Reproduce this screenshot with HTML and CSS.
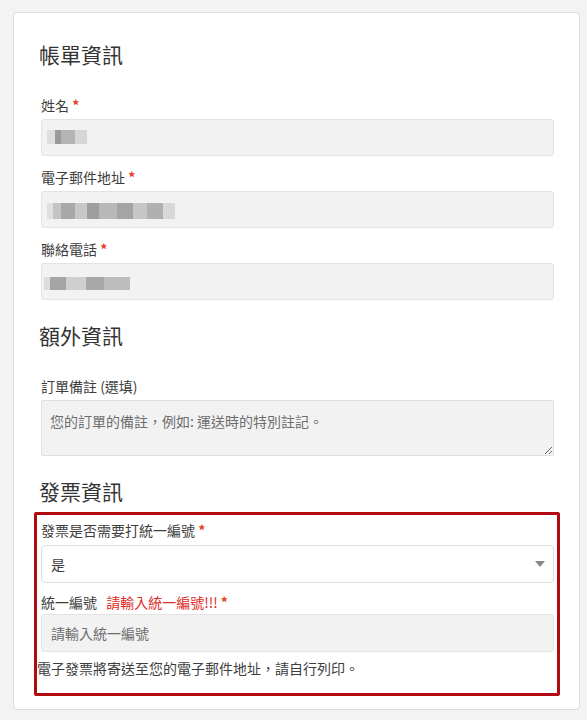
FILE: index.html
```html
<!DOCTYPE html>
<html lang="zh-Hant">
<head>
<meta charset="utf-8">
<link rel="stylesheet" href="styles.css">
</head>
<body>
<div class="card">
  <h3 class="heading first">帳單資訊</h3>
  <div class="row">
    <label class="label">姓名 <span class="req">*</span></label>
    <div class="input"><span class="redact r-name"></span></div>
  </div>
  <div class="row">
    <label class="label">電子郵件地址 <span class="req">*</span></label>
    <div class="input"><span class="redact r-email"></span></div>
  </div>
  <div class="row">
    <label class="label">聯絡電話 <span class="req">*</span></label>
    <div class="input"><span class="redact r-phone"></span></div>
  </div>

  <h3 class="heading second">額外資訊</h3>
  <div class="row">
    <label class="label">訂單備註 (選填)</label>
    <textarea class="textarea" placeholder="您的訂單的備註，例如: 運送時的特別註記。"></textarea>
  </div>

  <h3 class="heading third">發票資訊</h3>
  <div class="invoice">
    <div class="row inv-row">
      <label class="label">發票是否需要打統一編號 <span class="req">*</span></label>
      <div class="select">
        <span>是</span>
        <svg class="arrow" width="10" height="6" viewBox="0 0 10 6"><path d="M0 0H10L5 6Z" fill="#888"/></svg>
      </div>
    </div>
    <div class="row inv-row tax">
      <label class="label">統一編號 <span class="warn">請輸入統一編號!!!</span> <span class="req">*</span></label>
      <input class="input text" type="text" placeholder="請輸入統一編號">
    </div>
    <p class="note">電子發票將寄送至您的電子郵件地址，請自行列印。</p>
  </div>
</div>
</body>
</html>
```
FILE: styles.css
```css
* { box-sizing: border-box; }
html, body { margin: 0; padding: 0; }
body {
  background: #f3f3f3;
  font-family: "Noto Sans CJK TC", "Noto Sans", "Liberation Sans", sans-serif;
  color: #3d3d3d;
  font-size: 14px;
}
.card {
  margin: 12px 7px 12px 13px;
  background: #fff;
  border: 1px solid #dcdcdc;
  border-radius: 4px;
  padding: 26px 25px 13px 27px;
}
.heading {
  margin: 0;
  font-size: 21px;
  font-weight: 400;
  line-height: 30px;
  color: #333;
  margin-left: -2px;
}
.heading.first { margin-bottom: 25px; }
.heading.second { margin-top: 20px; margin-bottom: 25px; }
.heading.third { margin-top: 20px; margin-bottom: 6px; }
.row { margin-bottom: 10px; }
.label {
  display: block;
  line-height: 22px;
  margin-bottom: 3px;
  color: #3d3d3d;
}
.req { color: #e2401c; font-weight: 700; }
.warn { color: #e02b27; margin-left: 6px; }
.input {
  display: block;
  width: 100%;
  height: 37px;
  background: #f2f2f2;
  border: 1px solid #e3e3e3;
  border-radius: 3px;
  position: relative;
  padding: 0 9px;
  font: inherit;
  color: #3d3d3d;
}
.redact {
  position: absolute;
  display: block;
}
.r-name {
  left: 5px; top: 10px; width: 40px; height: 14px;
  background: linear-gradient(90deg, #dedede 0 8px, #9a9a9a 8px 14px, #b4b4b4 14px 28px, #d6d6d6 28px 40px);
}
.r-email {
  left: 5px; top: 11px; width: 128px; height: 16px;
  background:
    linear-gradient(90deg, #e0e0e0 0 6px, #c4c4c4 6px 14px, #a8a8a8 14px 28px, #c8c8c8 28px 40px, #9e9e9e 40px 52px, #b8b8b8 52px 70px, #a4a4a4 70px 86px, #c6c6c6 86px 100px, #b0b0b0 100px 116px, #d8d8d8 116px 128px);
}
.r-phone {
  left: 2px; top: 13px; width: 86px; height: 13px;
  background: linear-gradient(90deg, #dcdcdc 0 6px, #a4a4a4 6px 22px, #cfcfcf 22px 42px, #a8a8a8 42px 60px, #bdbdbd 60px 86px);
}
.textarea {
  display: block;
  width: 100%;
  height: 56px;
  background: #f2f2f2;
  border: 1px solid #e0e0e0;
  border-radius: 2px;
  padding: 9px 8px 8px;
  font: inherit;
  line-height: 22px;
  resize: vertical;
  color: #3d3d3d;
}
.textarea::placeholder, .text::placeholder { color: #6d6d6d; opacity: 1; }
.invoice {
  border: 3px solid #b10a10;
  border-radius: 2px;
  margin: 0 -6px 0 -7px;
  padding: 4px 0 14px 0;
}
.inv-row { padding: 0 3px 0 4px; margin-bottom: 8px; }
.inv-row .label { margin-bottom: 4px; }
.select {
  height: 38px;
  background: #fff;
  border: 1px solid #dedede;
  border-radius: 4px;
  display: flex;
  align-items: center;
  justify-content: space-between;
  padding: 0 8px 0 9px;
}
.arrow { display: block; }
.tax { margin-bottom: 5px; }
.tax .label { margin-bottom: 1px; }
.text { outline: none; height: 38px; }
.note { margin: 0; line-height: 22px; color: #3d3d3d; }
```
